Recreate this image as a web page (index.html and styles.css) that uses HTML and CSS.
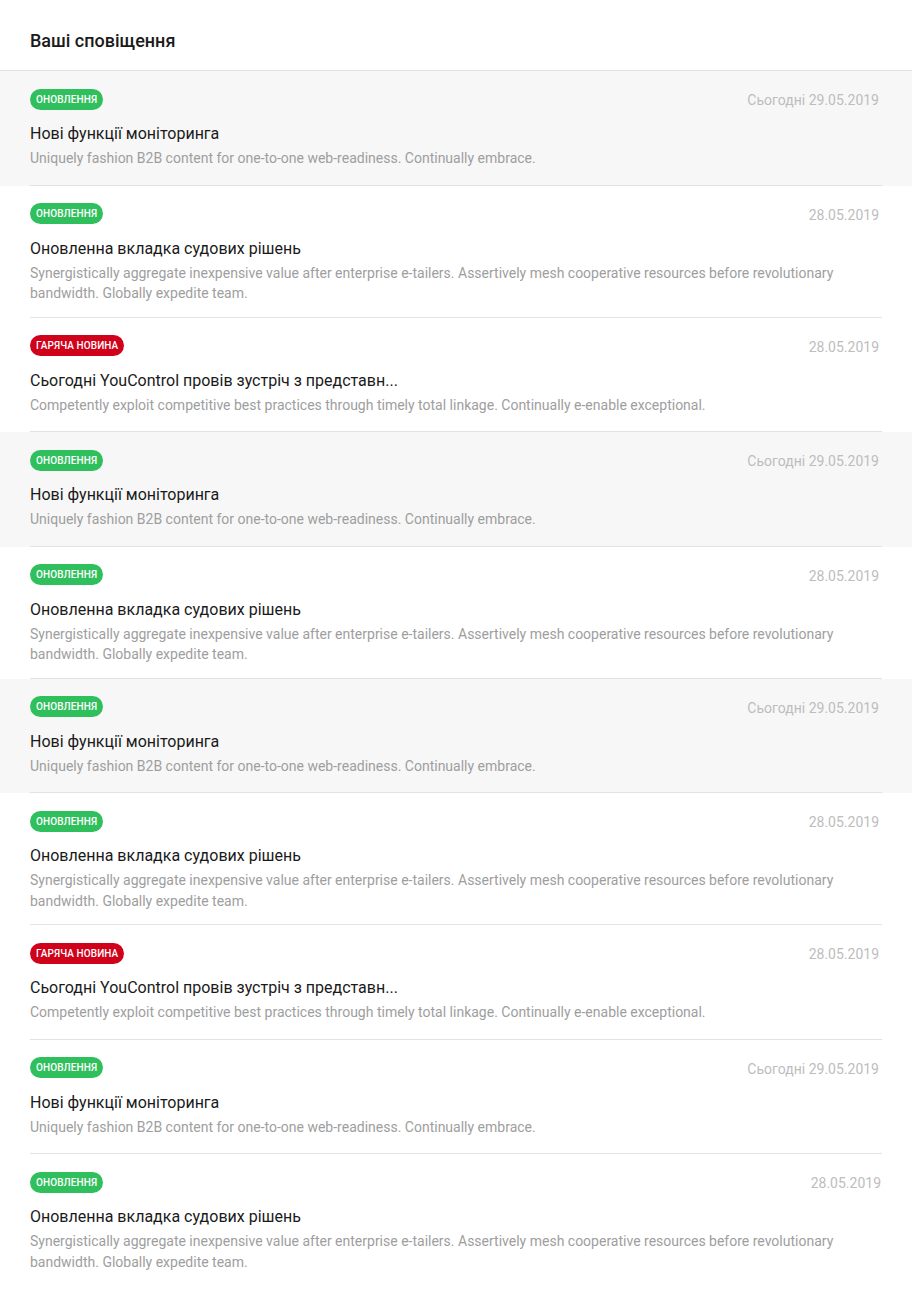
FILE: index.html
```html
<!DOCTYPE html>
<html lang="uk">
<head>
<meta charset="utf-8">
<title>Ваші сповіщення</title>
<link rel="stylesheet" href="styles.css">
</head>
<body>
<div class="page">
  <header class="header"><h1 class="header-title">Ваші сповіщення</h1></header>
  <ul class="list">
    <li class="item unread"><div class="inner">
      <div class="meta"><span class="badge green">Оновлення</span><span class="date">Сьогодні 29.05.2019</span></div>
      <div class="title">Нові функції моніторинга</div>
      <p class="desc">Uniquely fashion B2B content for one-to-one web-readiness. Continually embrace.</p>
    </div></li>
    <li class="item"><div class="inner">
      <div class="meta"><span class="badge green">Оновлення</span><span class="date">28.05.2019</span></div>
      <div class="title">Оновленна вкладка судових рішень</div>
      <p class="desc">Synergistically aggregate inexpensive value after enterprise e-tailers. Assertively mesh cooperative resources before revolutionary bandwidth. Globally expedite team.</p>
    </div></li>
    <li class="item"><div class="inner">
      <div class="meta"><span class="badge red">Гаряча новина</span><span class="date">28.05.2019</span></div>
      <div class="title">Сьогодні YouControl провів зустріч з представн...</div>
      <p class="desc">Competently exploit competitive best practices through timely total linkage. Continually e-enable exceptional.</p>
    </div></li>
    <li class="item unread"><div class="inner">
      <div class="meta"><span class="badge green">Оновлення</span><span class="date">Сьогодні 29.05.2019</span></div>
      <div class="title">Нові функції моніторинга</div>
      <p class="desc">Uniquely fashion B2B content for one-to-one web-readiness. Continually embrace.</p>
    </div></li>
    <li class="item"><div class="inner">
      <div class="meta"><span class="badge green">Оновлення</span><span class="date">28.05.2019</span></div>
      <div class="title">Оновленна вкладка судових рішень</div>
      <p class="desc">Synergistically aggregate inexpensive value after enterprise e-tailers. Assertively mesh cooperative resources before revolutionary bandwidth. Globally expedite team.</p>
    </div></li>
    <li class="item unread"><div class="inner">
      <div class="meta"><span class="badge green">Оновлення</span><span class="date">Сьогодні 29.05.2019</span></div>
      <div class="title">Нові функції моніторинга</div>
      <p class="desc">Uniquely fashion B2B content for one-to-one web-readiness. Continually embrace.</p>
    </div></li>
    <li class="item"><div class="inner">
      <div class="meta"><span class="badge green">Оновлення</span><span class="date">28.05.2019</span></div>
      <div class="title">Оновленна вкладка судових рішень</div>
      <p class="desc">Synergistically aggregate inexpensive value after enterprise e-tailers. Assertively mesh cooperative resources before revolutionary bandwidth. Globally expedite team.</p>
    </div></li>
    <li class="item"><div class="inner">
      <div class="meta"><span class="badge red">Гаряча новина</span><span class="date">28.05.2019</span></div>
      <div class="title">Сьогодні YouControl провів зустріч з представн...</div>
      <p class="desc">Competently exploit competitive best practices through timely total linkage. Continually e-enable exceptional.</p>
    </div></li>
    <li class="item"><div class="inner">
      <div class="meta"><span class="badge green">Оновлення</span><span class="date">Сьогодні 29.05.2019</span></div>
      <div class="title">Нові функції моніторинга</div>
      <p class="desc">Uniquely fashion B2B content for one-to-one web-readiness. Continually embrace.</p>
    </div></li>
    <li class="item last"><div class="inner">
      <div class="meta"><span class="badge green">Оновлення</span><span class="date">28.05.2019</span></div>
      <div class="title">Оновленна вкладка судових рішень</div>
      <p class="desc">Synergistically aggregate inexpensive value after enterprise e-tailers. Assertively mesh cooperative resources before revolutionary bandwidth. Globally expedite team.</p>
    </div></li>
  </ul>
</div>
</body>
</html>
```

FILE: styles.css
```css
* { box-sizing: border-box; }
html, body { margin: 0; padding: 0; background: #fff; }
body {
  font-family: Roboto, "Noto Sans", "Liberation Sans", sans-serif;
  color: #1f1f1f;
  -webkit-font-smoothing: antialiased;
}
.page { width: 912px; }
.header {
  height: 71px;
  padding: 0 30px;
  border-bottom: 1px solid #e3e3e3;
  display: flex;
  align-items: center;
}
.header-title {
  margin: 0;
  font-size: 18px;
  font-weight: 500;
  line-height: 24px;
  color: #1a1a1a;
  position: relative;
  top: 6px;
}
.list { list-style: none; margin: 0; padding: 0; }
.item { padding: 0 30px; background: #fff; }
.item.unread { background: #f7f7f7; }
.inner {
  min-height: 114.5px;
  padding: 17px 0 13px;
  border-bottom: 1px solid #e3e3e3;
}
.item.last .inner { border-bottom: none; }
.meta {
  display: flex;
  justify-content: space-between;
  align-items: center;
  height: 22px;
}
.badge {
  display: inline-flex;
  align-items: center;
  height: 21px;
  padding: 0 6px;
  border-radius: 11px;
  font-size: 10px;
  font-weight: 500;
  letter-spacing: 0.1px;
  text-transform: uppercase;
  color: #fff;
}
.badge.green { background: #2fbf5d; }
.badge.red { background: #d0021b; }
.date {
  font-size: 14px;
  color: #bdbdbd;
  margin-right: 3px;
  position: relative;
  top: 1px;
}
.item.last .date { margin-right: 1px; }
.title {
  margin-top: 13px;
  font-size: 16px;
  line-height: 22px;
  color: #1a1a1a;
}
.desc {
  margin: 3px 0 0;
  font-size: 14px;
  line-height: 20.5px;
  color: #9e9e9e;
  padding-right: 20px;
}
```
